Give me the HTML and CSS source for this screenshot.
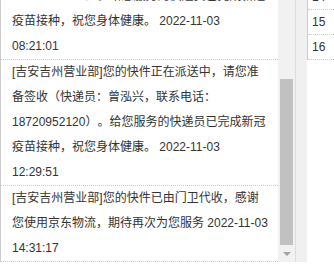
FILE: index.html
```html
<!DOCTYPE html>
<html lang="zh-CN">
<head>
    <meta charset="UTF-8">
    <meta name="viewport" content="width=device-width, initial-scale=1.0">
    <title>物流跟踪</title>
    <link rel="stylesheet" href="styles.css">
</head>
<body>
    <div class="page">
        <div class="track-panel">
            <div class="track-view">
                <ul class="track-list">
                    <li>[吉安吉州营业部]您的快件正在派送中，请您准备签收（快递员：曾泓兴，联系电话：18720952120）。给您服务的快递员已完成新冠疫苗接种，祝您身体健康。 2022-11-03 08:21:01</li>
                    <li>[吉安吉州营业部]您的快件正在派送中，请您准备签收（快递员：曾泓兴，联系电话：18720952120）。给您服务的快递员已完成新冠疫苗接种，祝您身体健康。 2022-11-03 12:29:51</li>
                    <li>[吉安吉州营业部]您的快件已由门卫代收，感谢您使用京东物流，期待再次为您服务 2022-11-03 14:31:17</li>
                </ul>
            </div>
            <div class="scrollbar">
                <div class="scroll-thumb"></div>
                <div class="scroll-down"><span class="arrow-down"></span></div>
            </div>
        </div>
        <div class="gap"></div>
        <div class="side-panel">
            <table class="side-table">
                <tr><td>14</td></tr>
                <tr><td>15</td></tr>
                <tr><td>16</td></tr>
            </table>
        </div>
    </div>
</body>
</html>
```

FILE: styles.css
```css
body {
    margin: 0;
    background-color: white;
    font-family: "Liberation Sans", "Noto Sans CJK SC", sans-serif;
    font-size: 12px;
    color: #333;
}

.page {
    display: flex;
    align-items: flex-start;
}

.track-panel {
    display: flex;
    height: 262px;
    border-left: 1px solid #ccc;
    border-right: 1px solid #ddd;
}

.track-view {
    width: 277px;
    overflow: hidden;
}

.track-list {
    list-style: none;
    margin: -66px 0 0 0;
    padding: 0;
    text-spacing-trim: space-all;
}

.track-list li {
    padding: 0 9px 0 11px;
    line-height: 25px;
    border-bottom: 1px dotted #ccc;
}

.scrollbar {
    width: 17px;
    background-color: #f1f1f1;
    display: flex;
    flex-direction: column;
    align-items: center;
}

.scroll-thumb {
    width: 13px;
    height: 166px;
    margin-top: 79px;
    background-color: #c1c1c1;
}

.scroll-down {
    height: 17px;
    width: 17px;
    display: flex;
    align-items: center;
    justify-content: center;
}

.arrow-down {
    width: 0;
    height: 0;
    border-left: 4px solid transparent;
    border-right: 4px solid transparent;
    border-top: 4px solid #a3a3a3;
}

.gap {
    width: 11px;
    height: 262px;
    background-color: #f0f0f0;
}

.side-panel {
    flex: 1;
}

.side-table {
    width: 100%;
    border-collapse: collapse;
    margin-top: -15px;
    border-left: 1px solid #ccc;
}

.side-table td {
    height: 24px;
    padding: 0 4px;
    border-bottom: 1px dotted #ccc;
    line-height: 24px;
}
```
